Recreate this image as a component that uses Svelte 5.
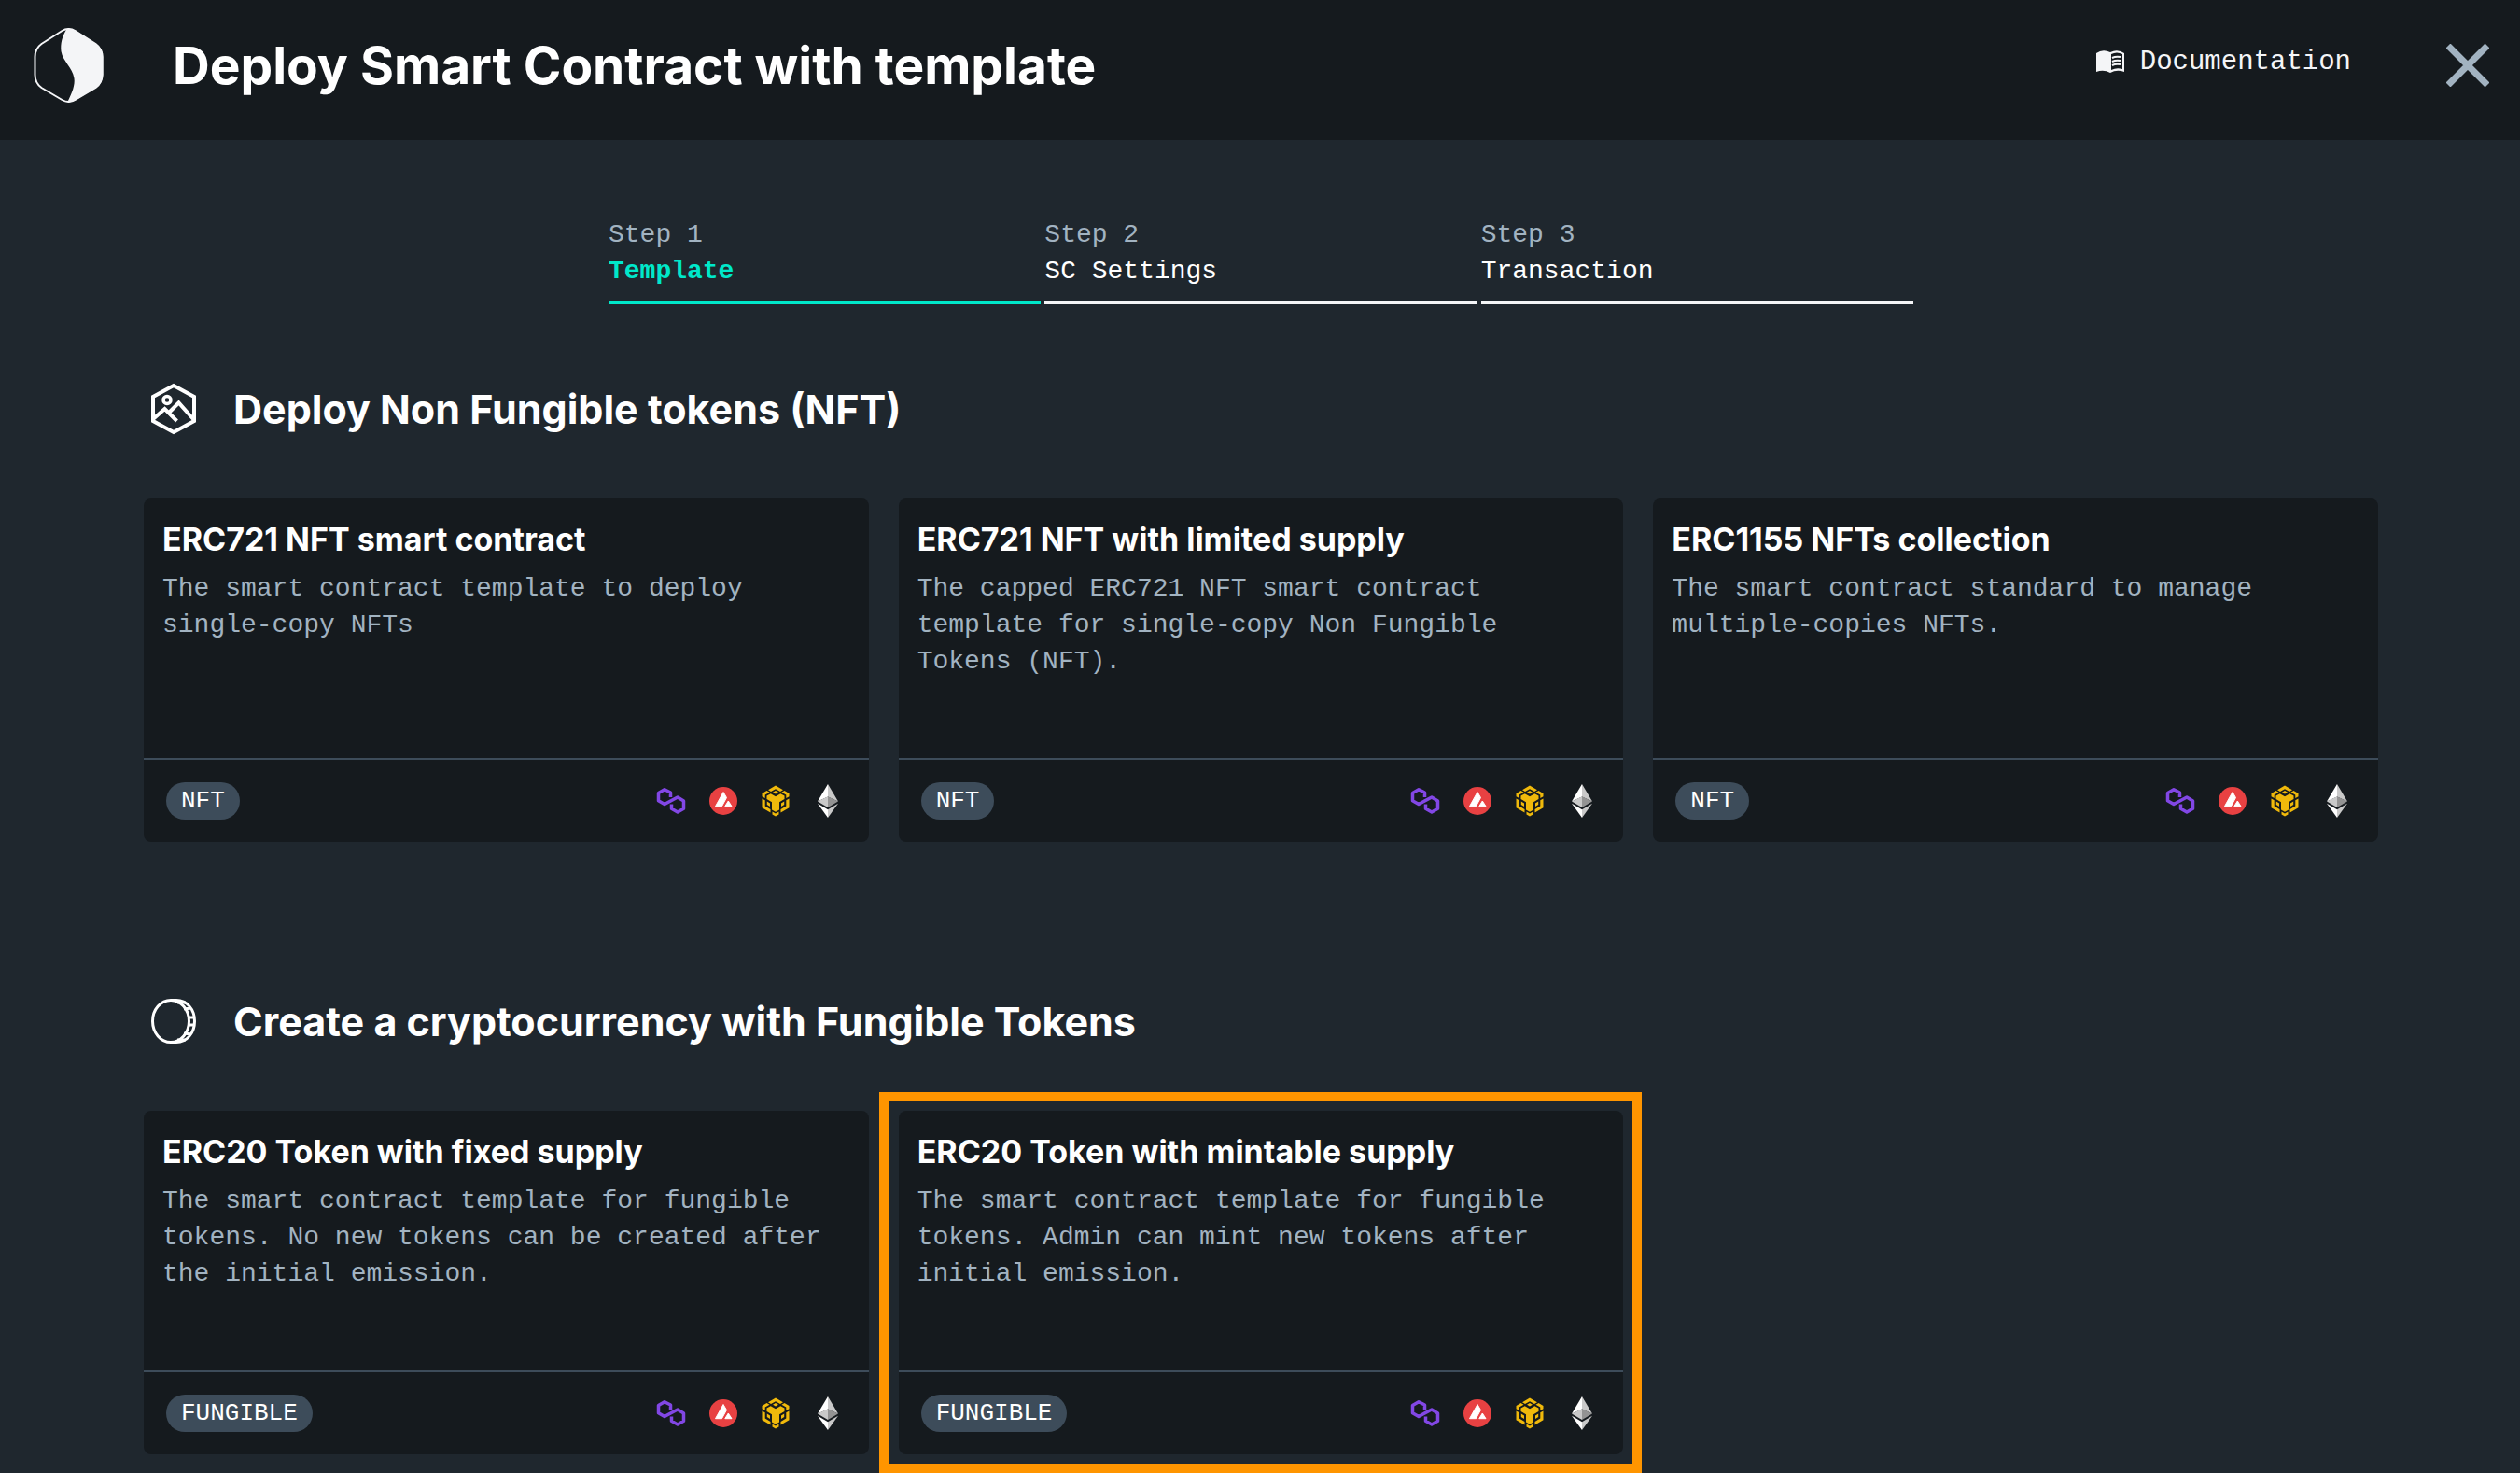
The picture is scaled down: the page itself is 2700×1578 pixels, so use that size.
<script>
  const steps = [
    { label: 'Step 1', name: 'Template', active: true },
    { label: 'Step 2', name: 'SC Settings', active: false },
    { label: 'Step 3', name: 'Transaction', active: false }
  ];

  const sections = [
    {
      icon: 'image',
      title: 'Deploy Non Fungible tokens (NFT)',
      cards: [
        { title: 'ERC721 NFT smart contract', text: 'The smart contract template to deploy single-copy NFTs', tag: 'NFT' },
        { title: 'ERC721 NFT with limited supply', text: 'The capped ERC721 NFT smart contract template for single-copy Non Fungible Tokens (NFT).', tag: 'NFT' },
        { title: 'ERC1155 NFTs collection', text: 'The smart contract standard to manage multiple-copies NFTs.', tag: 'NFT' }
      ]
    },
    {
      icon: 'coin',
      title: 'Create a cryptocurrency with Fungible Tokens',
      cards: [
        { title: 'ERC20 Token with fixed supply', text: 'The smart contract template for fungible tokens. No new tokens can be created after the initial emission.', tag: 'FUNGIBLE' },
        { title: 'ERC20 Token with mintable supply', text: 'The smart contract template for fungible tokens. Admin can mint new tokens after initial emission.', tag: 'FUNGIBLE', highlighted: true }
      ]
    }
  ];
</script>

<div class="page">
  <header class="topbar">
    <svg class="logo" viewBox="0 0 74 80" aria-hidden="true">
      <path d="M30 3 Q37 -1 44 3 L66 17 Q73 22 73 31 V50 Q73 59 66 64 L44 77 Q37 81 30 77 L8 64 Q1 59 1 50 V31 Q1 22 8 17 Z" fill="none" stroke="#f4f5f7" stroke-width="2" />
      <path d="M35 1 Q40 0 45 3 L66 17 Q74 22 74 31 V50 Q74 59 66 64 L45 77 Q41 80 36 79 C41 69 44 61 43 54 C41 42 31 36 29 25 C28 17 30 9 35 1 Z" fill="#f4f5f7" />
    </svg>
    <h1>Deploy Smart Contract with template</h1>
    <a class="docs" href="#documentation">
      <svg viewBox="0 0 30 24" aria-hidden="true">
        <path fill="#f4f5f7" fill-rule="evenodd" d="M0 3 Q7 -2 15 2 Q23 -2 30 3 V23 Q22 20 15 24 Q8 20 0 23 Z M16 4 V21 Q22 18 28 20 V4 Q22 1 16 4 Z" />
        <path fill="none" stroke="#f4f5f7" stroke-width="2" d="M17 8 Q21 6 26 7 M17 12 Q21 10 26 11 M17 16 Q21 14 26 15" />
      </svg>
      Documentation
    </a>
    <button class="close" aria-label="Close">
      <svg viewBox="0 0 46 46" aria-hidden="true">
        <path d="M2 2 L44 44 M44 2 L2 44" stroke="#a2b3c1" stroke-width="7" />
      </svg>
    </button>
  </header>

  <main>
    <ol class="steps">
      {#each steps as step}
        <li class:active={step.active}>
          <span class="label">{step.label}</span>
          <span class="name">{step.name}</span>
        </li>
      {/each}
    </ol>

    {#each sections as section}
      <section>
        <div class="heading">
          {#if section.icon === 'image'}
            <svg viewBox="0 0 48 56" aria-hidden="true" fill="none" stroke="#fff" stroke-width="4">
              <path d="M24 3 L46 15 V41 L24 53 L2 41 V15 Z" />
              <circle cx="17" cy="18.500" r="4" stroke-width="3.500" />
              <path d="M2 39 L14.500 28 L27.500 41 M19.500 31.500 L29.500 21.500 L46 40" stroke-width="4" />
            </svg>
          {:else}
            <svg viewBox="0 0 48 56" aria-hidden="true" fill="none" stroke="#fff" stroke-width="3">
              <ellipse cx="21" cy="28" rx="19.500" ry="22.500" />
              <path d="M21 5.500 H27 C38 5.500 46.500 15 46.500 28 S38 50.500 27 50.500 H21" />
              <path d="M28 8 L37 8 M35 15 L43 14 M40 24 H46 M40 32 H46 M35 41 L43 42 M28 48 L37 48" />
            </svg>
          {/if}
          <h2>{section.title}</h2>
        </div>
        <div class="cards">
          {#each section.cards as card}
            <article class:highlighted={card.highlighted}>
              <div class="body">
                <h3>{card.title}</h3>
                <p>{card.text}</p>
              </div>
              <footer>
                <span class="tag">{card.tag}</span>
                <div class="chains">
                  <svg viewBox="0 0 32 36" role="img" aria-label="Polygon" fill="none" stroke="#8247e5" stroke-width="3.500" stroke-linejoin="round">
                    <path d="M15.500 14 V9 L9 5.800 L2.500 9.500 V17.800 L9 21.500 L23 14 L29.500 18 V26.200 L23 30 L16.500 26.200 V21.500" />
                  </svg>
                  <svg viewBox="0 0 32 36" role="img" aria-label="Avalanche">
                    <circle cx="16" cy="18" r="15" fill="#e84142" />
                    <path d="M16 8.500 L19.500 14.500 L14.500 23.700 H7.500 Z M21.300 18 L25 23.700 H17.800 Z" fill="#fff" stroke="#fff" stroke-linejoin="round" />
                  </svg>
                  <svg viewBox="0 0 32 36" role="img" aria-label="BNB Chain" fill="#f0b90b">
                    <path d="M16 1.500 L24 6.200 L21 8 L16 5.200 L11 8 L8 6.200 Z" />
                    <path d="M16 7 L19 8.800 L16 10.600 L13 8.800 Z" />
                    <path d="M1.500 10 L6.500 7 L9.500 8.800 L4.700 11.600 V15 L1.500 13.200 Z M30.500 10 L25.500 7 L22.500 8.800 L27.300 11.600 V15 L30.500 13.200 Z" />
                    <path d="M6.500 12.500 L10.700 10.200 L16 13.300 L21.300 10.200 L25.500 12.500 V16 L20 19.200 V27.500 L16 29.700 L12 27.500 V19.200 L6.500 16 Z" />
                    <path d="M1.500 15.500 L4.700 17.300 V23.500 L10.500 27 V30.500 L1.500 25.300 Z M30.500 15.500 L27.300 17.300 V23.500 L21.500 27 V30.500 L30.500 25.300 Z" />
                    <path d="M6.800 18.500 L10 20.400 V24 L6.800 22 Z M25.200 18.500 L22 20.400 V24 L25.200 22 Z" />
                    <path d="M12.500 29.500 L16 31.500 L19.500 29.500 V32.500 L16 34.500 L12.500 32.500 Z" />
                  </svg>
                  <svg viewBox="0 0 32 36" role="img" aria-label="Ethereum">
                    <path d="M16 0 L5 18.500 L16 13.500 Z" fill="#fff" />
                    <path d="M16 0 L27 18.500 L16 13.500 Z" fill="#c9c9c9" />
                    <path d="M5 18.500 L16 13.300 V25 Z" fill="#c9c9c9" />
                    <path d="M27 18.500 L16 13.300 V25 Z" fill="#939393" />
                    <path d="M5 20.800 L16 27.300 V36 Z" fill="#fff" />
                    <path d="M27 20.800 L16 27.300 V36 Z" fill="#c9c9c9" />
                  </svg>
                </div>
              </footer>
            </article>
          {/each}
        </div>
      </section>
    {/each}
  </main>
</div>

<style>
  :global(body) {
    background: #1f272e;
  }

  .page {
    min-height: 100vh;
    color: #fff;
    font-family: 'Liberation Mono', monospace;
    font-size: 28px;
    line-height: 39px;
  }

  h1,
  h2,
  h3,
  p,
  ol {
    margin: 0;
    padding: 0;
  }

  h1,
  h2,
  h3 {
    font-family: Inter, sans-serif;
    font-weight: 700;
  }

  svg {
    display: block;
    flex: none;
  }

  .topbar {
    display: flex;
    align-items: center;
    height: 140px;
    padding: 0 33px 10px 36px;
    background: #151a1e;
  }

  .logo {
    width: 75px;
    height: 80px;
  }

  h1 {
    margin-left: 74px;
    font-size: 55px;
    line-height: 60px;
  }

  .docs {
    display: flex;
    align-items: center;
    gap: 17px;
    margin-left: auto;
    padding-bottom: 8px;
    color: #f4f5f7;
    font-size: 29px;
    text-decoration: none;
  }

  .docs svg {
    width: 30px;
    height: 24px;
  }

  .close {
    margin-left: 102px;
    padding: 0;
    border: 0;
    background: none;
    cursor: pointer;
  }

  .close svg {
    width: 46px;
    height: 46px;
  }

  main {
    padding: 82px 152px 20px 154px;
  }

  .steps {
    display: flex;
    gap: 4px;
    max-width: 1398px;
    margin: 0 auto;
    list-style: none;
  }

  .steps li {
    display: flex;
    flex: 1;
    flex-direction: column;
    padding-bottom: 12px;
    border-bottom: 4px solid #f4f5f7;
  }

  .label {
    color: #a2b3c1;
  }

  .steps .active {
    border-color: #00e8ca;
  }

  .active .name {
    color: #00e8ca;
    font-weight: 700;
  }

  section {
    margin-bottom: 156px;
  }

  section:last-child {
    margin-bottom: 0;
  }

  .steps + section {
    margin-top: 76px;
  }

  .heading {
    display: flex;
    align-items: center;
    gap: 40px;
    height: 72px;
    margin-bottom: 60px;
    padding-left: 8px;
  }

  .heading svg {
    width: 48px;
    height: 56px;
  }

  h2 {
    font-size: 43px;
    line-height: 50px;
  }

  .cards {
    display: grid;
    grid-template-columns: repeat(3, 1fr);
    gap: 32px;
  }

  article {
    position: relative;
    border-radius: 8px;
    background: #151a1e;
  }

  .highlighted::after {
    position: absolute;
    inset: -20px -20px -20px -21px;
    border: 10px solid #ff9500;
    content: '';
    pointer-events: none;
  }

  .body {
    box-sizing: border-box;
    min-height: 278px;
    padding: 24px 20px 20px;
  }

  h3 {
    margin-bottom: 13px;
    font-size: 34px;
    line-height: 40px;
  }

  p {
    color: #a2b3c1;
  }

  footer {
    display: flex;
    align-items: center;
    justify-content: space-between;
    padding: 24px 28px 24px 24px;
    border-top: 2px solid #3d4c5a;
  }

  .tag {
    padding: 0 16px;
    border-radius: 20px;
    background: #3d4c5a;
    font-size: 26px;
    line-height: 40px;
  }

  .chains {
    display: flex;
    gap: 24px;
  }

  .chains svg {
    width: 32px;
    height: 36px;
  }
</style>
